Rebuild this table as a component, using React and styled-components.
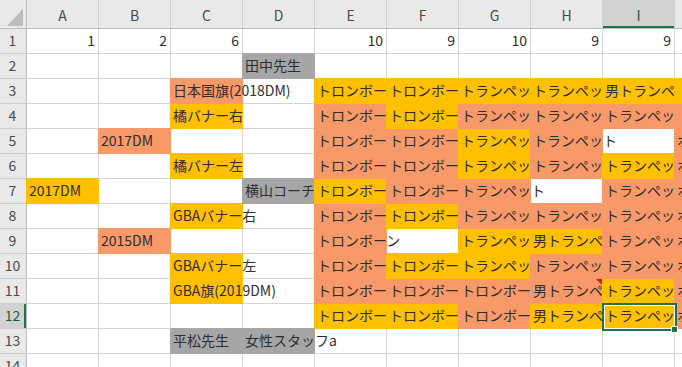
import React from 'react';
import styled, { createGlobalStyle } from 'styled-components';

const GlobalStyle = createGlobalStyle`
  html, body { margin: 0; padding: 0; background: #fff; overflow: hidden; }
  * { box-sizing: border-box; }
`;

const FILL = { o: '#F8996A', y: '#FFC000', g: '#A6A6A6' };
const GRID = '#D4D4D4';
const HEAD_BG = '#E9E9E9';
const HEAD_SEL = '#D2D2D2';
const HEAD_LINE = '#BDBDBD';
const GREEN = '#217346';
const FONT = `"Noto Sans CJK JP", "Noto Sans", sans-serif`;

const Sheet = styled.div`
  width: 682px;
  height: 367px;
  overflow: hidden;
  display: flex;
  flex-direction: column;
  font-family: ${FONT};
  background: #fff;
`;

const Row = styled.div`
  display: grid;
  grid-template-columns: 26px repeat(9, 72px) 1fr;
  grid-template-rows: ${p => (p.$header ? 28 : 25)}px;
  flex: 0 0 auto;
  height: ${p => (p.$header ? 29 : 25)}px;
  background: ${p => (p.$header ? HEAD_BG : '#fff')};
  border-bottom: ${p => (p.$header ? `1px solid ${HEAD_LINE}` : 'none')};
`;

const Corner = styled.div`
  grid-column: 1;
  grid-row: 1;
  display: flex;
`;

const ColHeader = styled.div`
  grid-column: ${p => p.$col};
  grid-row: 1;
  border-left: 1px solid ${p => (p.$col === 2 ? HEAD_LINE : '#D0D0D0')};
  background: ${p => (p.$selected ? HEAD_SEL : HEAD_BG)};
  box-shadow: ${p => (p.$selected ? `inset 0 -2px 0 ${GREEN}` : 'none')};
  color: ${p => (p.$selected ? '#1E5E3A' : '#4a4a4a')};
  font-size: 14px;
  line-height: 20px;
  padding-top: 5px;
  text-align: center;
  overflow: hidden;
`;

const RowHeader = styled.div`
  grid-column: 1;
  grid-row: 1;
  background: ${p => (p.$selected ? HEAD_SEL : HEAD_BG)};
  box-shadow: ${p => (p.$selected ? `inset -2px 0 0 ${GREEN}` : 'none')};
  color: ${p => (p.$selected ? '#1E5E3A' : '#4a4a4a')};
  border-bottom: 1px solid #D0D0D0;
  font-size: 14px;
  line-height: 23px;
  text-align: center;
  padding-right: 1px;
`;

const Cell = styled.div`
  grid-column: ${p => p.$col};
  grid-row: 1;
  position: relative;
  background: ${p => p.$fill || '#fff'};
  border-left: 1px solid ${p => p.$left};
  border-bottom: 1px solid ${p => p.$bottom};
`;

const Label = styled.div`
  grid-column: ${p => p.$col} / span ${p => p.$span};
  grid-row: 1;
  align-self: start;
  height: 24px;
  z-index: 1;
  overflow: hidden;
  white-space: nowrap;
  padding: 0 3px 0 3px;
  font-size: 14px;
  line-height: 23px;
  color: #2e2e2e;
  text-align: ${p => (p.$right ? 'right' : 'left')};
  pointer-events: none;
`;

const CommentMark = styled.div`
  position: absolute;
  top: 0;
  right: 0;
  width: 0;
  height: 0;
  border-top: 6px solid #E8141B;
  border-left: 6px solid transparent;
`;

const Selection = styled.div`
  position: absolute;
  left: -1px;
  top: -1px;
  width: 75px;
  height: 28px;
  border: 2px solid ${GREEN};
  box-shadow: inset 0 0 0 1px #fff;
  z-index: 3;
`;

const Handle = styled.div`
  position: absolute;
  left: 67px;
  top: 21px;
  width: 7px;
  height: 7px;
  background: ${GREEN};
  border: 1px solid #fff;
`;

const TB = 'トロンボーン';
const TP = 'トランペット';
const MTP = '男トランペット';
const HR = 'ホルン';
const c = (t, f, extra = {}) => ({ t, f, ...extra });
const n = t => ({ t, num: true });
const E = null;

const DATA = [
  [n('1'), n('2'), n('6'), E, n('10'), n('9'), n('10'), n('9'), n('9'), E],
  [E, E, E, c('田中先生', 'g'), E, E, E, E, E, E],
  [E, E, c('日本国旗(2018DM)', 'o'), E, c(TB, 'y'), c(TB, 'y'), c(TP, 'y'), c(TP, 'y'), c(MTP, 'y'), c(' ', 'y')],
  [E, E, c('橘バナー右', 'y'), E, c(TB, 'o'), c(TB, 'y'), c(TP, 'o'), c(TP, 'o'), c(TP, 'o'), c(' ', 'o')],
  [E, c('2017DM', 'o'), E, E, c(TB, 'o'), c(TB, 'o'), c(TP, 'y'), c(TP, 'o'), E, c(HR, 'o')],
  [E, E, c('橘バナー左', 'y'), E, c(TB, 'o'), c(TB, 'o'), c(TP, 'y'), c(TP, 'o'), c(TP, 'y'), c(HR, 'o')],
  [c('2017DM', 'y'), E, E, c('横山コーチ', 'g'), c(TB, 'y'), c(TB, 'o'), c(TP, 'o'), E, c(TP, 'o'), c(HR, 'o')],
  [E, E, c('GBAバナー右', 'y'), E, c(TB, 'o'), c(TB, 'y'), c(TP, 'o'), c(TP, 'o'), c(TP, 'o'), c(HR, 'o')],
  [E, c('2015DM', 'o'), E, E, c(TB, 'o'), E, c(TP, 'y'), c(MTP, 'y'), c(TP, 'o'), c(HR, 'o')],
  [E, E, c('GBAバナー左', 'y'), E, c(TB, 'o'), c(TB, 'y'), c(TP, 'y'), c(TP, 'o'), c(TP, 'o'), c(HR, 'o')],
  [E, E, c('GBA旗(2019DM)', 'y'), E, c(TB, 'o'), c(TB, 'o'), c(TB, 'o'), c(MTP, 'o', { comment: true }), c(TP, 'y'), c(HR, 'o')],
  [E, E, E, E, c(TB, 'y'), c(TB, 'y'), c(TB, 'o'), c(MTP, 'y'), c(TP, 'y', { selected: true }), c(HR, 'o')],
  [E, E, c('平松先生', 'g'), c('女性スタッフa', 'g'), E, E, E, E, E, E],
  [E, E, E, E, E, E, E, E, E, E],
];

const COLS = ['A', 'B', 'C', 'D', 'E', 'F', 'G', 'H', 'I', ''];
const SELECTED_COL = 8;
const SELECTED_ROW = 11;

const fillOf = cell => (cell && cell.f ? FILL[cell.f] : null);

function SheetRow({ cells, r }) {
  const below = DATA[r + 1] || [];
  const labels = [];
  cells.forEach((cell, i) => {
    if (!cell || !cell.t || !cell.t.trim()) return;
    let span = 1;
    if (!cell.num) {
      let j = i + 1;
      while (j < cells.length && !(cells[j] && cells[j].t)) {
        span += 1;
        j += 1;
      }
    }
    labels.push(
      <Label key={`l${i}`} $col={i + 2} $span={span} $right={cell.num}>
        {cell.t}
      </Label>
    );
  });

  return (
    <Row>
      <RowHeader $selected={r === SELECTED_ROW}>{r + 1}</RowHeader>
      {cells.map((cell, i) => {
        const own = fillOf(cell);
        const prev = i > 0 ? fillOf(cells[i - 1]) : null;
        const down = fillOf(below[i]);
        const left = own || prev || (i === 0 ? HEAD_LINE : GRID);
        const bottom = own || down || GRID;
        return (
          <Cell key={i} $col={i + 2} $fill={own} $left={left} $bottom={bottom}>
            {cell && cell.comment && <CommentMark />}
            {cell && cell.selected && (
              <Selection>
                <Handle />
              </Selection>
            )}
          </Cell>
        );
      })}
      {labels}
    </Row>
  );
}

export default function App() {
  return (
    <>
      <GlobalStyle />
      <Sheet>
        <Row $header>
          <Corner>
            <svg width="26" height="28" viewBox="0 0 26 28">
              <polygon points="7,26 23,26 23,9" fill="#BCBCBC" />
            </svg>
          </Corner>
          {COLS.map((name, i) => (
            <ColHeader key={i} $col={i + 2} $selected={i === SELECTED_COL}>
              {name}
            </ColHeader>
          ))}
        </Row>
        {DATA.map((cells, r) => (
          <SheetRow key={r} cells={cells} r={r} />
        ))}
      </Sheet>
    </>
  );
}
